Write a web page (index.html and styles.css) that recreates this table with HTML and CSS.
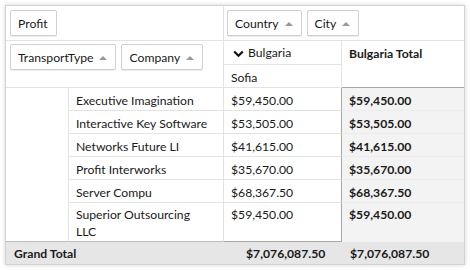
FILE: index.html
```html
<!DOCTYPE html>
<html lang="en">
<head>
    <meta charset="UTF-8">
    <title>Pivot Grid</title>
    <link rel="stylesheet" href="styles.css">
</head>
<body>
    <div class="pivot">
        <div class="area filter-area">
            <span class="field">Profit</span>
        </div>
        <div class="area column-area">
            <span class="field">Country <i class="sort"></i></span>
            <span class="field">City <i class="sort"></i></span>
        </div>
        <div class="area row-area">
            <span class="field">TransportType <i class="sort"></i></span>
            <span class="field">Company <i class="sort"></i></span>
        </div>
        <div class="cell col-head country">
            <svg class="chevron" width="11" height="8" viewBox="0 0 11 8"><polyline points="1.2,1.5 5.5,5.8 9.8,1.5" fill="none" stroke="#111" stroke-width="2.2"/></svg>
            Bulgaria
        </div>
        <div class="cell col-head grand-head">Bulgaria Total</div>
        <div class="cell col-head city">Sofia</div>

        <div class="cell transport"></div>

        <div class="cell name">Executive Imagination</div>
        <div class="cell value">$59,450.00</div>
        <div class="cell total first">$59,450.00</div>

        <div class="cell name">Interactive Key Software</div>
        <div class="cell value">$53,505.00</div>
        <div class="cell total">$53,505.00</div>

        <div class="cell name">Networks Future LI</div>
        <div class="cell value">$41,615.00</div>
        <div class="cell total">$41,615.00</div>

        <div class="cell name">Profit Interworks</div>
        <div class="cell value">$35,670.00</div>
        <div class="cell total">$35,670.00</div>

        <div class="cell name">Server Compu</div>
        <div class="cell value">$68,367.50</div>
        <div class="cell total">$68,367.50</div>

        <div class="cell name tall">Superior Outsourcing LLC</div>
        <div class="cell value tall">$59,450.00</div>
        <div class="cell total tall">$59,450.00</div>

        <div class="cell grand label">Grand Total</div>
        <div class="cell grand sum">$7,076,087.50</div>
        <div class="cell grand sum last">$7,076,087.50</div>
    </div>
</body>
</html>
```

FILE: styles.css
```css
body {
    margin: 0;
    padding: 5px;
    background: #ffffff;
    font-family: "Segoe UI", "Lato", sans-serif;
    font-size: 12.2px;
    color: #1a1a1a;
}
.pivot {
    display: grid;
    grid-template-columns: 63px 155px 118px 122px;
    grid-template-rows: 35px 24px 23px repeat(5, 23px) 39px 22px;
    width: 458px;
    border: 1px solid #d2d2d2;
    box-shadow: 0 0 4px rgba(0, 0, 0, 0.18);
    background: #fff;
}
.area {
    display: flex;
    align-items: flex-start;
    gap: 5px;
    padding: 4px 0 0 4px;
    border-bottom: 1px solid #e3e3e3;
}
.filter-area {
    grid-column: 1 / 3;
    border-right: 1px solid #e3e3e3;
}
.column-area {
    grid-column: 3 / 5;
    padding-left: 3px;
}
.row-area {
    grid-column: 1 / 3;
    grid-row: 2 / 4;
    border-right: 1px solid #e3e3e3;
    padding-top: 3px;
}
.field {
    display: inline-flex;
    align-items: center;
    box-sizing: border-box;
    height: 26px;
    padding: 1px 8px 0 7px;
    border: 1px solid #d0d0d0;
    border-radius: 2px;
    background: #fff;
    box-shadow: 0 1px 0 #ececec;
    white-space: nowrap;
}
.sort {
    display: inline-block;
    margin-left: 6px;
    width: 0;
    height: 0;
    border-left: 4px solid transparent;
    border-right: 4px solid transparent;
    border-bottom: 4px solid #9a9a9a;
}
.cell {
    box-sizing: border-box;
    padding: 5px 8px 0 7px;
    border-right: 1px solid #e3e3e3;
    border-bottom: 1px solid #e3e3e3;
    white-space: nowrap;
}
.col-head.country {
    grid-column: 3;
    grid-row: 2;
    display: flex;
    align-items: flex-start;
    gap: 4px;
    padding-left: 9px;
    padding-top: 4px;
}
.chevron {
    margin-top: 5px;
}
.col-head.city {
    grid-column: 3;
    grid-row: 3;
}
.grand-head {
    grid-column: 4;
    grid-row: 2 / 4;
    font-weight: 700;
    border-right: none;
    border-bottom-color: #a8a8a8;
    padding-top: 5px;
}
.transport {
    grid-column: 1;
    grid-row: 4 / 10;
    border-bottom-color: #bdbdbd;
}
.name {
    grid-column: 2;
}
.value {
    grid-column: 3;
    border-right-color: #a8a8a8;
}
.total {
    grid-column: 4;
    background: #f3f3f3;
    font-weight: 700;
    border-right: none;
    border-bottom-color: #ececec;
}
.tall {
    white-space: normal;
    line-height: 17px;
    padding-top: 3px;
    border-bottom-color: #bdbdbd;
}
.name.tall {
    padding-right: 30px;
}
.value.tall {
    border-bottom-color: #a8a8a8;
}
.total.tall {
    border-bottom: none;
}
.grand {
    background: #e6e6e6;
    font-weight: 700;
    border: none;
    padding-top: 4px;
}
.grand.label {
    grid-column: 1 / 3;
    padding-left: 8px;
}
.grand.sum {
    padding-left: 22px;
}
.grand.sum.last {
    padding-left: 8px;
}
```
